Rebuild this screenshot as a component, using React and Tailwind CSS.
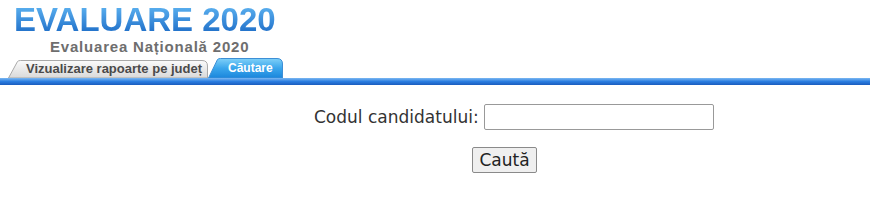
import React from 'react'

const Tab = ({ label, width, height, active, textClass }) => {
  const w = width
  const h = height
  const d = `M0.5,${h} L9.5,1.5 Q10.5,0.5 12.5,0.5 L${w - 6},0.5 Q${w - 0.5},0.5 ${w - 0.5},6 L${w - 0.5},${h} Z`
  const gid = active ? 'tabBlue' : 'tabGray'
  return (
    <div className="relative shrink-0" style={{ width: w, height: h }}>
      <svg className="absolute inset-0" width={w} height={h} viewBox={`0 0 ${w} ${h}`}>
        <defs>
          <linearGradient id={gid} x1="0" y1="0" x2="0" y2="1">
            {active ? (
              <>
                <stop offset="0" stopColor="#7fd0f8" />
                <stop offset="0.5" stopColor="#3aa6ec" />
                <stop offset="1" stopColor="#1a86dc" />
              </>
            ) : (
              <>
                <stop offset="0" stopColor="#fbfbfb" />
                <stop offset="1" stopColor="#d9d9d9" />
              </>
            )}
          </linearGradient>
        </defs>
        <path d={d} fill={`url(#${gid})`} stroke={active ? '#3d8fd6' : '#a9a9a9'} strokeWidth="1" />
      </svg>
      <div className={`relative flex h-full items-center font-['Liberation_Sans',Arial,sans-serif] font-bold ${textClass}`}>
        {label}
      </div>
    </div>
  )
}

export default function App() {
  return (
    <div className="min-h-[216px] w-full bg-white">
      {/* Header */}
      <div className="pl-[14px] pt-[3px]">
        <div className="bg-gradient-to-b from-[#62b8f4] to-[#1868c4] bg-clip-text font-['Liberation_Sans',Arial,sans-serif] text-[33px] leading-[33px] font-bold text-transparent">
          EVALUARE 2020
        </div>
      </div>
      <div className="mt-[3px] pl-[50px] font-['Liberation_Sans',Arial,sans-serif] text-[15px] leading-[15px] font-bold tracking-[0.8px] text-[#6e6e6e]">
        Evaluarea Națională 2020
      </div>

      {/* Tabs */}
      <div className="mt-[4px] flex items-end pl-[8px]">
        <Tab
          label="Vizualizare rapoarte pe județ"
          width={200}
          height={18}
          textClass="pl-[18px] text-[13px] text-[#4a4a4a]"
        />
        <Tab
          label="Căutare"
          width={75}
          height={20}
          active
          textClass="pl-[20px] text-[12px] text-white"
        />
      </div>
      <div className="h-[7px] w-full bg-gradient-to-b from-[#7ab8f2] via-[#2a7de0] to-[#1a5cbe]" />

      {/* Form */}
      <div className="pt-[19px] pl-[314px] font-['DejaVu_Sans',Verdana,sans-serif] text-[#333]">
        <div className="flex items-center gap-[5px]">
          <label className="text-[17px] leading-[20px]">Codul candidatului:</label>
          <input
            type="text"
            className="h-[26px] w-[230px] rounded-[2px] border border-[#999] bg-white px-1 outline-none"
          />
        </div>
        <div className="mt-[17px] pl-[158px]">
          <button className="h-[26px] w-[65px] rounded-[2px] border border-[#8a8a8a] bg-[#efefef] text-[17px] leading-[20px] text-[#222]">
            Caută
          </button>
        </div>
      </div>
    </div>
  )
}
